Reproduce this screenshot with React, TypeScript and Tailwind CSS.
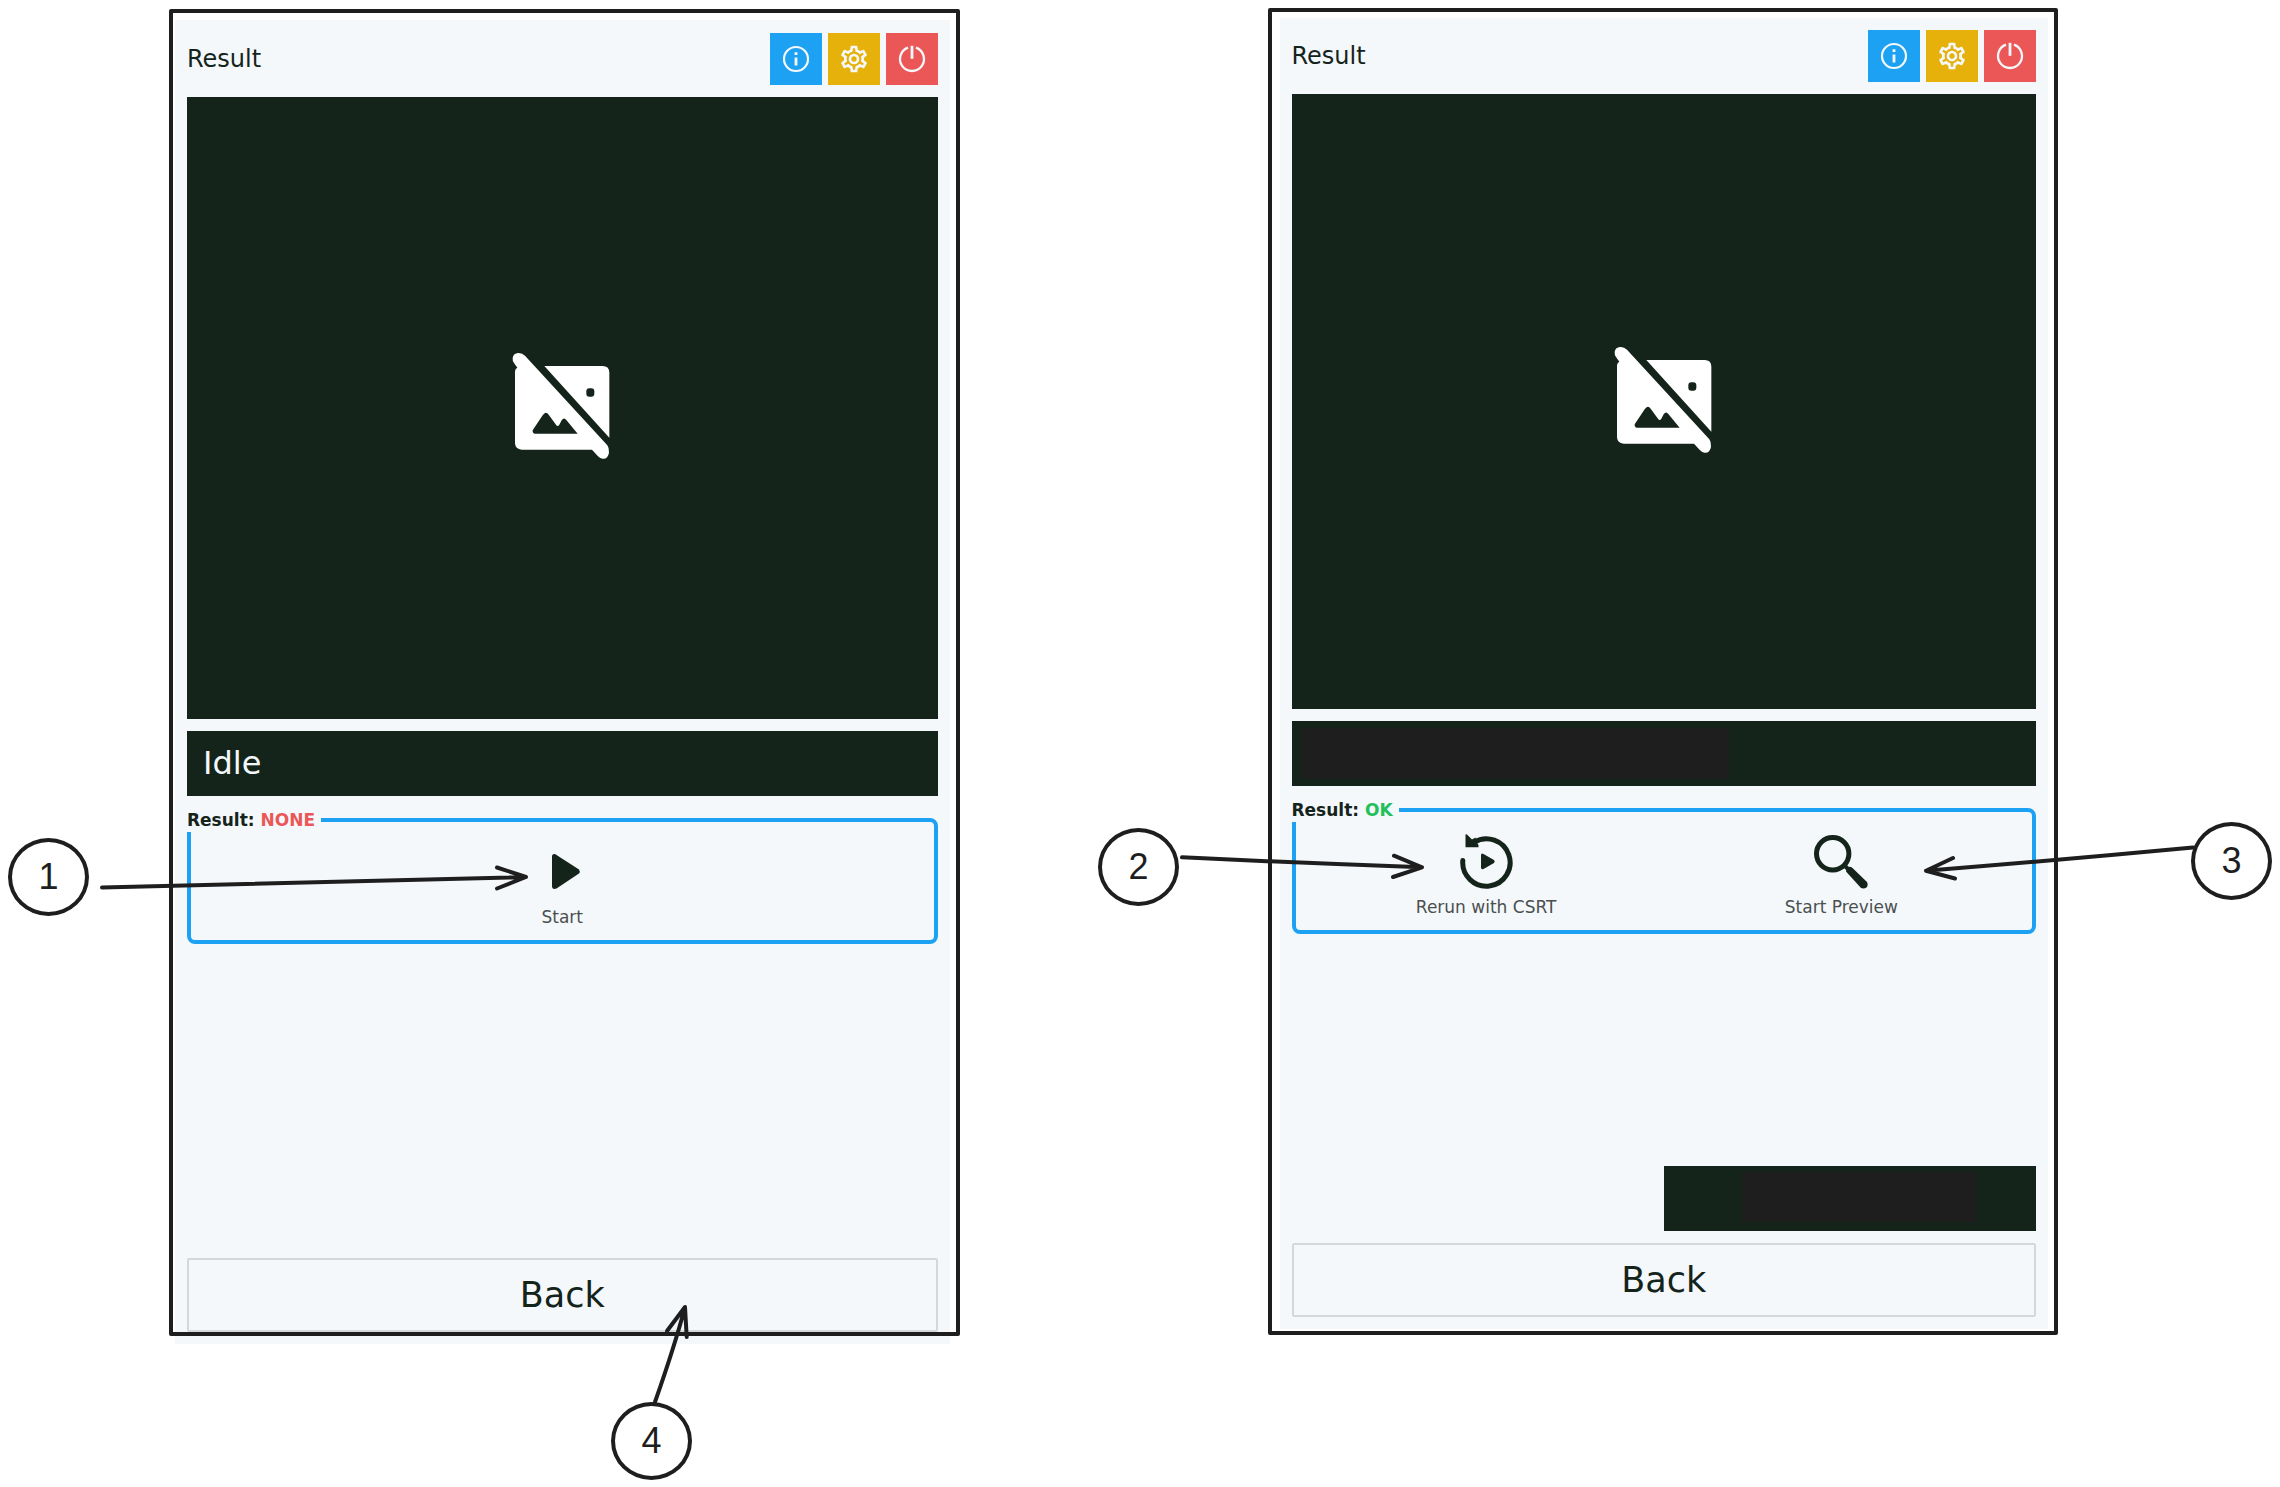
import type { ReactNode } from "react";

function InfoIcon() {
  return (
    <svg viewBox="0 0 32 32" className="size-8" fill="none" stroke="#f4f8fb" aria-hidden="true">
      <circle cx="16" cy="16" r="12" strokeWidth="2.2" />
      <path d="M16 14.5v8M16 9.3v2.7" strokeWidth="2.8" />
    </svg>
  );
}

function GearIcon() {
  return (
    <svg viewBox="0 0 24 24" className="size-8" fill="#f4f8fb" aria-hidden="true">
      <path d="M12,8A4,4 0 0,1 16,12A4,4 0 0,1 12,16A4,4 0 0,1 8,12A4,4 0 0,1 12,8M12,10A2,2 0 0,0 10,12A2,2 0 0,0 12,14A2,2 0 0,0 14,12A2,2 0 0,0 12,10M10,22C9.75,22 9.54,21.82 9.5,21.58L9.13,18.93C8.5,18.68 7.96,18.34 7.44,17.94L4.95,18.95C4.73,19.03 4.46,18.95 4.34,18.73L2.34,15.27C2.21,15.05 2.27,14.78 2.46,14.63L4.57,12.97L4.5,12L4.57,11L2.46,9.37C2.27,9.22 2.21,8.95 2.34,8.73L4.34,5.27C4.46,5.05 4.73,4.96 4.95,5.05L7.44,6.05C7.96,5.66 8.5,5.32 9.13,5.07L9.5,2.42C9.54,2.18 9.75,2 10,2H14C14.25,2 14.46,2.18 14.5,2.42L14.87,5.07C15.5,5.32 16.04,5.66 16.56,6.05L19.05,5.05C19.27,4.96 19.54,5.05 19.66,5.27L21.66,8.73C21.79,8.95 21.73,9.22 21.54,9.37L19.43,11L19.5,12L19.43,13L21.54,14.63C21.73,14.78 21.79,15.05 21.66,15.27L19.66,18.73C19.54,18.95 19.27,19.04 19.05,18.95L16.56,17.95C16.04,18.34 15.5,18.68 14.87,18.93L14.5,21.58C14.46,21.82 14.25,22 14,22H10M11.25,4L10.88,6.61C9.68,6.86 8.62,7.5 7.85,8.39L5.44,7.35L4.69,8.65L6.8,10.2C6.4,11.37 6.4,12.64 6.8,13.8L4.68,15.36L5.43,16.66L7.86,15.62C8.63,16.5 9.68,17.14 10.87,17.38L11.24,20H12.76L13.13,17.39C14.32,17.14 15.37,16.5 16.14,15.62L18.57,16.66L19.32,15.36L17.2,13.81C17.6,12.64 17.6,11.37 17.2,10.2L19.31,8.65L18.56,7.35L16.15,8.39C15.38,7.5 14.32,6.86 13.12,6.62L12.75,4H11.25Z" />
    </svg>
  );
}

function PowerIcon() {
  return (
    <svg viewBox="0 0 32 32" className="size-8" fill="none" stroke="#f4f8fb" aria-hidden="true">
      <path d="M12 4.7a12 12 0 1 0 8 0" strokeWidth="2.3" />
      <path d="M16 2.8v13" strokeWidth="2.8" />
    </svg>
  );
}

function NoImageIcon() {
  return (
    <svg viewBox="56 72 324 324" className="size-[108px] overflow-visible" role="img" aria-label="No image">
      <path
        fill="#fff"
        d="M165 108H340Q359 108 360 127V323ZM86 69Q98 68 107 77L354 346Q360 354 359 368Q356 386 342 386Q333 387 326 379L308 359H97Q78 358 77 340V124Q78 115 84 113L74 99Q69 92 70 83Q73 70 86 69Z"
      />
      <path
        fill="#15241b"
        d="M130 301L160 256Q169 241 178 254L200 284Q205 292 210 284L217 271Q224 260 231 270L265 311H136Q129 310 130 301Z"
      />
      <rect x="291" y="175" width="24" height="25" rx="9" fill="#15241b" />
    </svg>
  );
}

function PlayIcon() {
  return (
    <svg viewBox="0 0 56 56" className="size-14" fill="#15241b" aria-hidden="true">
      <path d="M18 13Q18 11 20.500 11Q21.500 11 22.500 12L45 26.500Q46.500 28.500 45 30.500L22.500 45.500Q18 47 18 43Z" />
    </svg>
  );
}

function RerunIcon() {
  return (
    <svg viewBox="0 0 56 56" className="size-14" aria-hidden="true">
      <path
        d="M16 9.300A23.700 23.700 0 1 1 4.800 27.500"
        fill="none"
        stroke="#15241b"
        strokeWidth="5"
        strokeLinecap="round"
      />
      <path d="M7.500 1.500Q8.500 1 9.500 2L14 6.500L17.500 4.500L19 10L20.500 12V14.300H7.500Z" fill="#15241b" />
      <path d="M23 22.500Q23 19.500 25.500 21L36 27Q37.500 28.500 36 30L25.500 36Q23 37 23 34.500Z" fill="#15241b" />
    </svg>
  );
}

function SearchIcon() {
  return (
    <svg viewBox="0 0 56 56" className="size-14" aria-hidden="true">
      <circle cx="19.700" cy="20.700" r="16.200" fill="none" stroke="#15241b" strokeWidth="5" />
      <path d="M30 31L37 38" stroke="#15241b" strokeWidth="4" />
      <path d="M33 38.500L34 35Q36.500 32.500 39.500 35L54 49Q55.500 52 53.500 54.500Q51 56 48 55Z" fill="#15241b" />
    </svg>
  );
}

function Header() {
  return (
    <header className="flex items-center justify-between">
      <h2 className="text-2xl">Result</h2>
      <div className="flex gap-1.5">
        <button aria-label="Information" className="flex size-[52px] items-center justify-center bg-[#1da1f2]">
          <InfoIcon />
        </button>
        <button aria-label="Settings" className="flex size-[52px] items-center justify-center bg-[#e6b10a]">
          <GearIcon />
        </button>
        <button aria-label="Power" className="flex size-[52px] items-center justify-center bg-[#eb5757]">
          <PowerIcon />
        </button>
      </div>
    </header>
  );
}

function ResultGroup({ legend, children }: { legend: ReactNode; children: ReactNode }) {
  return (
    <fieldset className="rounded-lg border-4 border-[#1da1f2] px-[13px] pt-[11px] pb-[11px]">
      <legend className="-ml-[17px] bg-[#f4f8fb] pr-1.5 text-[17px] leading-6 font-bold">{legend}</legend>
      <div className="flex">{children}</div>
    </fieldset>
  );
}

function Action({ icon, label }: { icon: ReactNode; label: string }) {
  return (
    <div className="flex flex-1 justify-center">
      <button className="flex flex-col items-center gap-1.5 text-[17px] leading-6 text-[#4a4f50]">
        {icon}
        <span>{label}</span>
      </button>
    </div>
  );
}

function BackButton() {
  return (
    <button className="h-[74px] w-full rounded-xs border-2 border-[#d5d7d9] text-[35px]">Back</button>
  );
}

function Frame({ className }: { className: string }) {
  return (
    <div className={`pointer-events-none absolute inset-x-0 top-0 rounded-xs border-4 border-[#1e1e1e] ${className}`} />
  );
}

function Badge({ className, children }: { className: string; children: ReactNode }) {
  return (
    <div
      className={`absolute flex h-[78px] w-[81px] items-center justify-center rounded-[50%] border-4 border-[#1e1e1e] font-['Liberation_Sans',sans-serif] text-4xl text-[#1e1e1e] ${className}`}
    >
      {children}
    </div>
  );
}

function Arrows() {
  return (
    <svg
      viewBox="0 0 2280 1487"
      className="pointer-events-none absolute top-0 left-0 w-full"
      fill="none"
      stroke="#1e1e1e"
      strokeWidth="4"
      strokeLinecap="round"
      strokeLinejoin="round"
      aria-hidden="true"
    >
      <path d="M102 887.500Q300 883 526 877M497 867.500L526 877L497 888.500" />
      <path d="M1182 857.300Q1300 863 1422 867.300M1394 855.700L1422 867.300L1393 877" />
      <path d="M2193 847.500Q2060 860 1926 870.700M1953 858L1926 870.700L1955 878.500" />
      <path d="M655 1402Q675 1345 685 1307M667 1331L685 1307L686.700 1337" />
    </svg>
  );
}

export default function App() {
  return (
    <main className="relative grid min-h-screen grid-cols-2 gap-x-[308px] bg-white pt-2 pr-[222px] pb-[143px] pl-[169px] font-['DejaVu_Sans',sans-serif] text-[#15241b]">
      <div className="relative mt-px flex pt-[11px] pr-[10px] pl-[6px]">
        <section className="flex flex-1 flex-col gap-3 bg-[#f4f8fb] px-3 pt-[13px] pb-3">
          <Header />
          <div className="flex aspect-[751/622] items-center justify-center bg-[#15241b]">
            <NoImageIcon />
          </div>
          <p className="flex h-[65px] items-center bg-[#15241b] px-4 text-[32px] text-[#f4f8fb]">Idle</p>
          <ResultGroup
            legend={
              <>
                Result: <span className="text-[#eb5757]">NONE</span>
              </>
            }
          >
            <Action icon={<PlayIcon />} label="Start" />
          </ResultGroup>
          <div className="mt-auto">
            <BackButton />
          </div>
        </section>
        <Frame className="bottom-2" />
      </div>

      <div className="relative mb-[9px] flex pt-[10px] pr-[10px] pb-1.5 pl-3">
        <section className="flex flex-1 flex-col gap-3 bg-[#f4f8fb] p-3">
          <Header />
          <div className="flex aspect-[744/615] items-center justify-center bg-[#15241b]">
            <NoImageIcon />
          </div>
          <div className="h-[65px] bg-[#15241b] px-[9px] py-[7px]">
            <div className="h-full w-[59%] bg-[#1e1e1e]" />
          </div>
          <ResultGroup
            legend={
              <>
                Result: <span className="text-[#22bf5b]">OK</span>
              </>
            }
          >
            <Action icon={<RerunIcon />} label="Rerun with CSRT" />
            <Action icon={<SearchIcon />} label="Start Preview" />
          </ResultGroup>
          <div className="mt-auto flex flex-col gap-3">
            <div className="flex h-[65px] w-1/2 justify-end self-end bg-[#15241b] pt-1.5 pr-[59px] pb-[9px]">
              <div className="w-[75%] bg-[#1e1e1e]" />
            </div>
            <BackButton />
          </div>
        </section>
        <Frame className="bottom-0" />
      </div>

      <Arrows />
      <Badge className="top-[838px] left-[8px]">1</Badge>
      <Badge className="top-[828px] left-[1098px]">2</Badge>
      <Badge className="top-[822px] left-[2191px]">3</Badge>
      <Badge className="top-[1402px] left-[611px]">4</Badge>
    </main>
  );
}
